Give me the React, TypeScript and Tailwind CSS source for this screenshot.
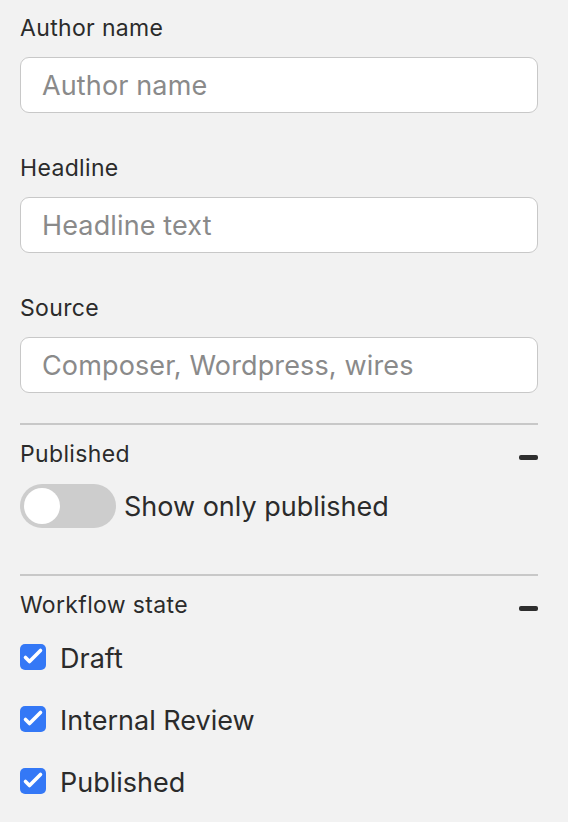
import React from 'react';

const font = { fontFamily: 'Inter, "Noto Sans", sans-serif' };

const TextField: React.FC<{ label: string; placeholder: string }> = ({ label, placeholder }) => (
  <div className="flex flex-col">
    <label className="text-[23px] leading-[28px] tracking-[0.015em] text-[#2b2b2b]">{label}</label>
    <input
      type="text"
      placeholder={placeholder}
      className="mt-[15px] h-[56px] w-full rounded-[9px] border-[1.5px] border-[#c8c8c8] bg-white px-[21px] pt-[1px] text-[27px] tracking-[0.005em] text-[#2b2b2b] outline-none placeholder:text-[#8a8a8a]"
    />
  </div>
);

const SectionHeader: React.FC<{ title: string }> = ({ title }) => (
  <div className="flex h-[28px] items-center justify-between">
    <span className="text-[23px] leading-[28px] tracking-[0.015em] text-[#2b2b2b]">{title}</span>
    <span className="mt-[6px] block h-[5px] w-[19px] rounded-[2px] bg-[#2e2e2e]" />
  </div>
);

const Check: React.FC<{ label: string }> = ({ label }) => (
  <label className="flex h-[26px] items-center gap-[14px]">
    <span className="flex h-[26px] w-[26px] items-center justify-center rounded-[5px] bg-[#3478f6]">
      <svg width="26" height="26" viewBox="0 0 26 26" fill="none">
        <path d="M5.5 13.5l4 4L20.5 6.5" stroke="white" strokeWidth="3.6" strokeLinecap="round" strokeLinejoin="round" />
      </svg>
    </span>
    <span className="pt-[3px] text-[27px] leading-[26px] text-[#2b2b2b]">{label}</span>
  </label>
);

export default function App() {
  const [published, setPublished] = React.useState(false);

  return (
    <div className="min-h-screen bg-[#f2f2f2] pl-5 pr-[30px] pt-[14px]" style={font}>
      <div className="flex flex-col gap-[41px]">
        <TextField label="Author name" placeholder="Author name" />
        <TextField label="Headline" placeholder="Headline text" />
        <TextField label="Source" placeholder="Composer, Wordpress, wires" />
      </div>

      <div className="mt-[30px] h-[2px] bg-[#c8c8c8]" />
      <div className="mt-[15px]">
        <SectionHeader title="Published" />
        <div className="mt-[16px] flex items-center gap-[8px]">
          <button
            onClick={() => setPublished(!published)}
            className="flex h-[44px] w-[96px] items-center rounded-full bg-[#cdcdcd] p-[4px]"
          >
            <span className="block h-[36px] w-[36px] rounded-full bg-white" />
          </button>
          <span className="pt-[2px] text-[27px] text-[#2b2b2b]">Show only published</span>
        </div>
      </div>

      <div className="mt-[46px] h-[2px] bg-[#c8c8c8]" />
      <div className="mt-[15px]">
        <SectionHeader title="Workflow state" />
        <div className="mt-[25px] flex flex-col gap-[36px]">
          <Check label="Draft" />
          <Check label="Internal Review" />
          <Check label="Published" />
        </div>
      </div>
    </div>
  );
}
